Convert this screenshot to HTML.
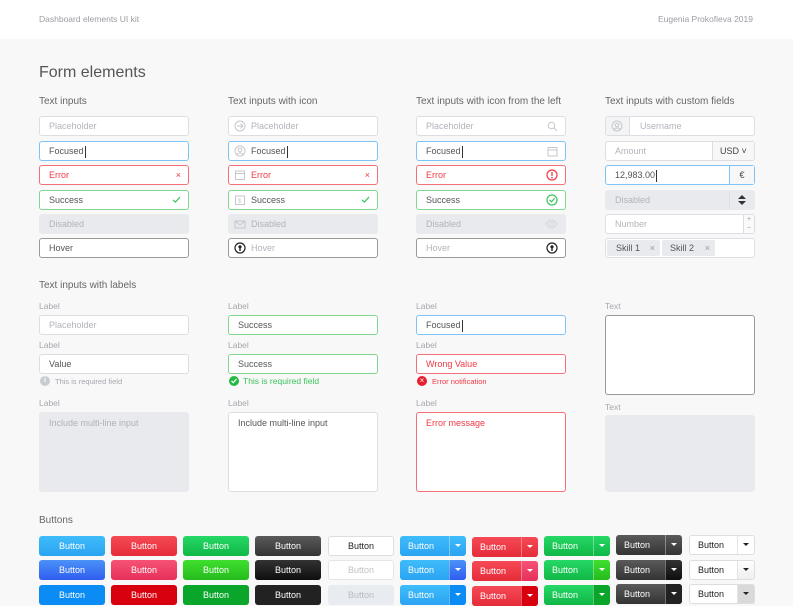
<!DOCTYPE html>
<html><head><meta charset="utf-8"><style>
*{box-sizing:border-box;margin:0;padding:0}
body{width:793px;height:600px;overflow:hidden;background:#f8f8f9;font-family:"Liberation Sans",sans-serif;position:relative;color:#555}
.hd{position:absolute;left:0;top:0;width:793px;height:39px;background:#fff}
.a{position:absolute}
.t{position:absolute;font-size:10px;color:#666;white-space:nowrap}
.lb{position:absolute;font-size:8.5px;color:#a4a7ad}
.in,.ta{position:absolute;width:150px;border:1px solid #dcdee3;border-radius:3px;background:#fff;font-size:9px;color:#555;white-space:nowrap}
.in{height:20px;line-height:18px;padding-left:9px}
.ta{height:80px;padding:5px 9px}
.ph{color:#b1b4ba}
.fo{border-color:#7ec4f6}
.er{border-color:#f27179;color:#ef3a45}
.su{border-color:#7fd88d}
.di{background:#e8eaee;border-color:#e8eaee;color:#b1b4ba}
.ho{border-color:#9a9a9a}
.ic{padding-left:22px}
.cur{display:inline-block;width:1px;height:12px;background:#333;vertical-align:middle;margin-left:1px}
.r{position:absolute;right:7px;top:4px}
.l{position:absolute;left:5px;top:3px}
.bt{position:absolute;width:66px;height:20px;border-radius:3px;color:#fff;font-size:9px;line-height:20px;text-align:center}
.sp{position:absolute;width:66px;height:20px;border-radius:3px;color:#fff;font-size:9px;line-height:20px;padding-left:8px;overflow:hidden}
.sp i{position:absolute;right:0;top:0;width:17px;height:20px;border-left:1px solid rgba(255,255,255,.35)}
.sp i:after{content:"";position:absolute;left:5px;top:8px;border-left:3px solid transparent;border-right:3px solid transparent;border-top:3px solid #fff}
.sp.w i{border-left:1px solid #e2e4e8}
.sp.w i:after{border-top-color:#222}
</style></head><body>
<div class="hd"></div>
<div class="t" style="left:39px;top:14px;font-size:8.5px;color:#9a9ca2">Dashboard elements UI kit</div>
<div class="t" style="left:658px;top:14px;font-size:8.5px;color:#9a9ca2">Eugenia Prokofieva 2019</div>
<div class="t" style="left:39px;top:64px;font-size:16px;color:#555">Form elements</div>

<div class="t" style="left:39px;top:96px">Text inputs</div>
<div class="t" style="left:228px;top:96px">Text inputs with icon</div>
<div class="t" style="left:416px;top:96px">Text inputs with icon from the left</div>
<div class="t" style="left:605px;top:96px">Text inputs with custom fields</div>

<!-- col1 -->
<div class="in ph" style="left:39px;top:116px">Placeholder</div>
<div class="in fo" style="left:39px;top:141px">Focused<span class="cur"></span></div>
<div class="in er" style="left:39px;top:165px">Error<span class="r" style="top:0;color:#ef3a45;font-size:9px">×</span></div>
<div class="in su" style="left:39px;top:190px">Success<svg class="r" width="9" height="9" viewBox="0 0 9 9"><path d="M1 5l2.5 2L8 2" stroke="#3cc35a" stroke-width="1.2" fill="none"/></svg></div>
<div class="in di" style="left:39px;top:214px">Disabled</div>
<div class="in ho" style="left:39px;top:238px">Hover</div>

<!-- col2 -->
<div class="in ph ic" style="left:228px;top:116px"><svg class="l" width="12" height="12" viewBox="0 0 12 12"><circle cx="6" cy="6" r="5" stroke="#c4c7cc" fill="none"/><path d="M3 6h6M6.5 3.5L9 6 6.5 8.5" stroke="#c4c7cc" fill="none"/></svg>Placeholder</div>
<div class="in fo ic" style="left:228px;top:141px"><svg class="l" width="12" height="12" viewBox="0 0 12 12"><circle cx="6" cy="6" r="5" stroke="#c4c7cc" fill="none"/><circle cx="6" cy="5" r="1.8" stroke="#c4c7cc" fill="none"/><path d="M2.8 9.5c1-2 5.4-2 6.4 0" stroke="#c4c7cc" fill="none"/></svg>Focused<span class="cur"></span></div>
<div class="in er ic" style="left:228px;top:165px"><svg class="l" width="12" height="12" viewBox="0 0 12 12"><rect x="1.5" y="2" width="9" height="8.5" stroke="#c4c7cc" fill="none"/><path d="M1.5 4.5h9" stroke="#c4c7cc"/></svg>Error<span class="r" style="top:0;color:#ef3a45">×</span></div>
<div class="in su ic" style="left:228px;top:190px"><svg class="l" width="12" height="12" viewBox="0 0 12 12"><rect x="1.5" y="2" width="9" height="8.5" stroke="#c4c7cc" fill="none"/><text x="4" y="9" font-size="6" fill="#c4c7cc">$</text></svg>Success<svg class="r" width="9" height="9" viewBox="0 0 9 9"><path d="M1 5l2.5 2L8 2" stroke="#3cc35a" stroke-width="1.2" fill="none"/></svg></div>
<div class="in di ic" style="left:228px;top:214px"><svg class="l" width="12" height="12" viewBox="0 0 12 12"><rect x="1" y="3" width="10" height="7" stroke="#c4c7cc" fill="none"/><path d="M1 3l5 4 5-4" stroke="#c4c7cc" fill="none"/></svg>Disabled</div>
<div class="in ho ic ph" style="left:228px;top:238px"><svg class="l" width="12" height="12" viewBox="0 0 12 12"><circle cx="6" cy="6" r="5" stroke="#222" stroke-width="1.2" fill="none"/><circle cx="6" cy="4.8" r="1.6" fill="#222"/><rect x="5.3" y="5.5" width="1.4" height="3.5" fill="#222"/></svg>Hover</div>

<!-- col3 -->
<div class="in ph" style="left:416px;top:116px">Placeholder<svg class="r" width="11" height="11" viewBox="0 0 11 11"><circle cx="4.5" cy="4.5" r="3.3" stroke="#c4c7cc" fill="none"/><path d="M7 7l3 3" stroke="#c4c7cc"/></svg></div>
<div class="in fo" style="left:416px;top:141px">Focused<span class="cur"></span><svg class="r" width="11" height="11" viewBox="0 0 11 11"><rect x="1" y="1.5" width="9" height="8.5" stroke="#c4c7cc" fill="none"/><path d="M1 4h9" stroke="#c4c7cc"/></svg></div>
<div class="in er" style="left:416px;top:165px">Error<svg class="r" style="top:3px" width="12" height="12" viewBox="0 0 12 12"><circle cx="6" cy="6" r="5" stroke="#ef3a45" stroke-width="1.2" fill="none"/><path d="M6 3v4" stroke="#ef3a45" stroke-width="1.3"/><circle cx="6" cy="8.7" r=".8" fill="#ef3a45"/></svg></div>
<div class="in su" style="left:416px;top:190px">Success<svg class="r" style="top:3px" width="12" height="12" viewBox="0 0 12 12"><circle cx="6" cy="6" r="5" stroke="#3cc35a" stroke-width="1.2" fill="none"/><path d="M3.5 6l2 1.8 3-3.5" stroke="#3cc35a" stroke-width="1.2" fill="none"/></svg></div>
<div class="in di" style="left:416px;top:214px">Disabled<svg class="r" style="top:4px" width="13" height="10" viewBox="0 0 13 10"><path d="M1 5c3-5 8-5 11 0-3 5-8 5-11 0z" stroke="#d2d5da" fill="none"/><circle cx="6.5" cy="5" r="1.8" stroke="#d2d5da" fill="none"/></svg></div>
<div class="in ho ph" style="left:416px;top:238px">Hover<svg class="r" style="top:3px" width="12" height="12" viewBox="0 0 12 12"><circle cx="6" cy="6" r="5" stroke="#222" stroke-width="1.2" fill="none"/><circle cx="6" cy="4.8" r="1.6" fill="#222"/><rect x="5.3" y="5.5" width="1.4" height="3.5" fill="#222"/></svg></div>

<!-- col4 -->
<div class="in ph" style="left:605px;top:116px;padding-left:34px">Username<div class="a" style="left:0;top:0;width:24px;height:18px;background:#f3f4f6;border-right:1px solid #dcdee3;border-radius:3px 0 0 3px"><svg class="a" style="left:5px;top:3px" width="12" height="12" viewBox="0 0 12 12"><circle cx="6" cy="6" r="5" stroke="#c4c7cc" fill="none"/><circle cx="6" cy="5" r="1.8" stroke="#c4c7cc" fill="none"/><path d="M2.8 9.5c1-2 5.4-2 6.4 0" stroke="#c4c7cc" fill="none"/></svg></div></div>
<div class="in ph" style="left:605px;top:141px">Amount<div class="a" style="left:106px;top:0;width:42px;height:18px;background:#f7f7f8;border-left:1px solid #dcdee3;color:#444;padding-left:7px">USD ˅</div></div>
<div class="in fo" style="left:605px;top:165px">12,983.00<span class="cur"></span><div class="a" style="left:123px;top:0;width:25px;height:18px;background:#f7f7f8;border-left:1px solid #7ec4f6;color:#444;text-align:center">€</div></div>
<div class="in di" style="left:605px;top:190px">Disabled<div class="a" style="left:123px;top:0;width:25px;height:18px;border-left:1px solid #dcdee3"><svg class="a" style="left:8px;top:4px" width="8" height="10" viewBox="0 0 8 10"><path d="M0 4L4 0 8 4zM0 6h8L4 10z" fill="#333"/></svg></div></div>
<div class="in ph" style="left:605px;top:214px">Number<div class="a" style="left:137px;top:0;width:11px;height:18px;border-left:1px solid #dcdee3;background:#fafafa;font-size:7px;line-height:9px;text-align:center;color:#999">+<br>−</div></div>
<div class="in" style="left:605px;top:238px;padding:0"><div class="a" style="left:1px;top:1px;width:53px;height:16px;background:#e8eaee;border-radius:2px;line-height:16px;padding-left:9px">Skill 1<span style="position:absolute;right:5px;color:#999">×</span></div><div class="a" style="left:56px;top:1px;width:53px;height:16px;background:#e8eaee;border-radius:2px;line-height:16px;padding-left:8px">Skill 2<span style="position:absolute;right:5px;color:#999">×</span></div></div>

<!-- labels section -->
<div class="t" style="left:39px;top:280px">Text inputs with labels</div>
<div class="lb" style="left:39px;top:301px">Label</div>
<div class="in ph" style="left:39px;top:315px">Placeholder</div>
<div class="lb" style="left:39px;top:340px">Label</div>
<div class="in" style="left:39px;top:354px">Value</div>
<div class="a" style="left:40px;top:376px;width:10px;height:10px;border-radius:50%;background:#c9ccd1;color:#fff;font-size:7px;text-align:center;line-height:10px;font-weight:bold">i</div>
<div class="lb" style="left:55px;top:377px;font-size:7.5px">This is required field</div>
<div class="lb" style="left:39px;top:398px">Label</div>
<div class="ta di" style="left:39px;top:412px;color:#aeb1b7">Include multi-line input</div>

<div class="lb" style="left:228px;top:301px">Label</div>
<div class="in su" style="left:228px;top:315px">Success</div>
<div class="lb" style="left:228px;top:340px">Label</div>
<div class="in su" style="left:228px;top:354px">Success</div>
<div class="a" style="left:229px;top:376px;width:10px;height:10px;border-radius:50%;background:#25b847"><svg class="a" style="left:2px;top:2px" width="6" height="6" viewBox="0 0 6 6"><path d="M.5 3l1.8 1.6L5.5 1" stroke="#fff" stroke-width="1.2" fill="none"/></svg></div>
<div class="lb" style="left:243px;top:376px;font-size:8.5px;color:#3cc35a">This is required field</div>
<div class="lb" style="left:228px;top:398px">Label</div>
<div class="ta" style="left:228px;top:412px">Include multi-line input</div>

<div class="lb" style="left:416px;top:301px">Label</div>
<div class="in fo" style="left:416px;top:315px">Focused<span class="cur"></span></div>
<div class="lb" style="left:416px;top:340px">Label</div>
<div class="in er" style="left:416px;top:354px">Wrong Value</div>
<div class="a" style="left:417px;top:376px;width:10px;height:10px;border-radius:50%;background:#e8202e;color:#fff;font-size:8px;text-align:center;line-height:10px">×</div>
<div class="lb" style="left:432px;top:377px;font-size:7.5px;color:#ef3a45">Error notification</div>
<div class="lb" style="left:416px;top:398px">Label</div>
<div class="ta er" style="left:416px;top:412px">Error message</div>

<div class="lb" style="left:605px;top:301px">Text</div>
<div class="ta ho" style="left:605px;top:315px"></div>
<div class="lb" style="left:605px;top:402px">Text</div>
<div class="ta di" style="left:605px;top:415px;height:77px"></div>

<!-- buttons -->
<div class="t" style="left:39px;top:515px">Buttons</div>
<div class="bt" style="left:39px;top:536px;background:linear-gradient(#3fbcfa,#2ba4f2)">Button</div>
<div class="bt" style="left:111px;top:536px;background:linear-gradient(#f54a56,#e62c39)">Button</div>
<div class="bt" style="left:183px;top:536px;background:linear-gradient(#26d866,#10b746)">Button</div>
<div class="bt" style="left:255px;top:536px;background:linear-gradient(#5a5a5a,#333)">Button</div>
<div class="bt" style="left:328px;top:536px;background:#fff;border:1px solid #dcdee3;color:#222;line-height:18px">Button</div>
<div class="bt" style="left:39px;top:560px;background:linear-gradient(#4b92f8,#2f5df0)">Button</div>
<div class="bt" style="left:111px;top:560px;background:linear-gradient(#f65376,#e6305a)">Button</div>
<div class="bt" style="left:183px;top:560px;background:linear-gradient(#3fdf2e,#26bb1d)">Button</div>
<div class="bt" style="left:255px;top:560px;background:linear-gradient(#333,#0e0e0e)">Button</div>
<div class="bt" style="left:328px;top:560px;background:#fff;border:1px solid #e4e6ea;color:#c0c2c6;line-height:18px">Button</div>
<div class="bt" style="left:39px;top:585px;background:#0b8cf4">Button</div>
<div class="bt" style="left:111px;top:585px;background:#d8000f">Button</div>
<div class="bt" style="left:183px;top:585px;background:#0aa62c">Button</div>
<div class="bt" style="left:255px;top:585px;background:#222">Button</div>
<div class="bt" style="left:328px;top:585px;background:#e8ebef;color:#b8bbc0">Button</div>

<div class="sp" style="left:400px;top:536px;background:linear-gradient(#3fbcfa,#2ba4f2)">Button<i></i></div>
<div class="sp" style="left:472px;top:537px;background:linear-gradient(#f54a56,#e62c39)">Button<i></i></div>
<div class="sp" style="left:544px;top:536px;background:linear-gradient(#26d866,#10b746)">Button<i></i></div>
<div class="sp" style="left:616px;top:535px;background:linear-gradient(#5a5a5a,#333)">Button<i></i></div>
<div class="sp w" style="left:689px;top:535px;background:#fff;border:1px solid #dcdee3;color:#222;line-height:18px">Button<i style="top:-1px"></i></div>
<div class="sp" style="left:400px;top:560px;background:linear-gradient(#3fbcfa,#2ba4f2)">Button<i style="background:linear-gradient(#4b92f8,#2f5df0)"></i></div>
<div class="sp" style="left:472px;top:561px;background:linear-gradient(#f54a56,#e62c39)">Button<i style="background:linear-gradient(#f65376,#e6305a)"></i></div>
<div class="sp" style="left:544px;top:560px;background:linear-gradient(#26d866,#10b746)">Button<i style="background:linear-gradient(#3fdf2e,#26bb1d)"></i></div>
<div class="sp" style="left:616px;top:560px;background:linear-gradient(#5a5a5a,#333)">Button<i style="background:linear-gradient(#333,#0e0e0e)"></i></div>
<div class="sp w" style="left:689px;top:560px;background:#fff;border:1px solid #dcdee3;color:#222;line-height:18px">Button<i style="top:-1px;background:linear-gradient(#fff,#eee)"></i></div>
<div class="sp" style="left:400px;top:585px;background:linear-gradient(#3fbcfa,#2ba4f2)">Button<i style="background:#0b8cf4"></i></div>
<div class="sp" style="left:472px;top:586px;background:linear-gradient(#f54a56,#e62c39)">Button<i style="background:#d8000f"></i></div>
<div class="sp" style="left:544px;top:585px;background:linear-gradient(#26d866,#10b746)">Button<i style="background:#0aa62c"></i></div>
<div class="sp" style="left:616px;top:584px;background:linear-gradient(#5a5a5a,#333)">Button<i style="background:#222"></i></div>
<div class="sp w" style="left:689px;top:584px;background:#fff;border:1px solid #dcdee3;color:#222;line-height:18px">Button<i style="top:-1px;background:#d9d9d9"></i></div>
</body></html>
